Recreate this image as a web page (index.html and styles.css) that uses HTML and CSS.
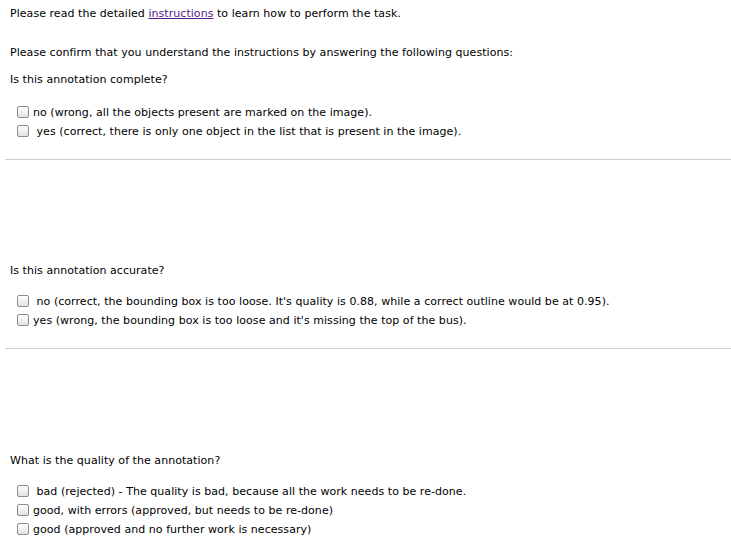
FILE: index.html
```html
<!DOCTYPE html>
<html>
<head>
<meta charset="utf-8">
<link rel="stylesheet" href="styles.css">
</head>
<body>
<div class="page">
  <p class="text intro">Please read the detailed <a class="link" href="#">instructions</a> to learn how to perform the task.</p>
  <p class="text confirm">Please confirm that you understand the instructions by answering the following questions:</p>

  <section class="question first">
    <p class="text q">Is this annotation complete?</p>
    <div class="options">
      <label class="opt"><input type="checkbox" class="box">no (wrong, all the objects present are marked on the image).</label>
      <label class="opt"><input type="checkbox" class="box"> yes (correct, there is only one object in the list that is present in the image).</label>
    </div>
  </section>
  <hr class="rule">

  <section class="question">
    <p class="text q">Is this annotation accurate?</p>
    <div class="options">
      <label class="opt"><input type="checkbox" class="box"> no (correct, the bounding box is too loose. It's quality is 0.88, while a correct outline would be at 0.95).</label>
      <label class="opt"><input type="checkbox" class="box">yes (wrong, the bounding box is too loose and it's missing the top of the bus).</label>
    </div>
  </section>
  <hr class="rule">

  <section class="question last">
    <p class="text q">What is the quality of the annotation?</p>
    <div class="options">
      <label class="opt"><input type="checkbox" class="box"> bad (rejected) - The quality is bad, because all the work needs to be re-done.</label>
      <label class="opt"><input type="checkbox" class="box">good, with errors (approved, but needs to be re-done)</label>
      <label class="opt"><input type="checkbox" class="box">good (approved and no further work is necessary)</label>
    </div>
  </section>
</div>
</body>
</html>
```

FILE: styles.css
```css
html, body {
  margin: 0;
  padding: 0;
  background: #fff;
}

body {
  font-family: "DejaVu Sans", Verdana, sans-serif;
  font-size: 11px;
  letter-spacing: 0.05px;
  line-height: 19px;
  color: #000;
}

.page {
  padding: 4px 0 0 5px;
}

.text {
  margin: 0 0 0 5px;
}

.link {
  color: #551a8b;
  text-decoration: underline;
}

.confirm {
  margin-top: 20px;
}

.question {
  margin-top: 101px;
}

.question.first {
  margin-top: 8px;
}

.question.last {
  margin-top: 102px;
}

.options {
  margin-top: 12px;
  padding-left: 12px;
  display: flex;
  flex-direction: column;
}

.question.first .options {
  margin-top: 14px;
}

.opt {
  display: block;
  white-space: pre;
  height: 19px;
}

.box {
  -webkit-appearance: none;
  appearance: none;
  width: 12px;
  height: 12px;
  margin: 0 4px 0 0;
  border: 1px solid #8c8c8c;
  border-radius: 2px;
  background: linear-gradient(#ffffff, #e2e2e2);
  box-shadow: inset 0 1px 0 #fff;
  vertical-align: -2px;
  box-sizing: border-box;
}

.rule {
  margin: 18px 0 0 0;
  height: 0;
  border: 0;
  border-top: 1px solid #cfcfcf;
}
```
